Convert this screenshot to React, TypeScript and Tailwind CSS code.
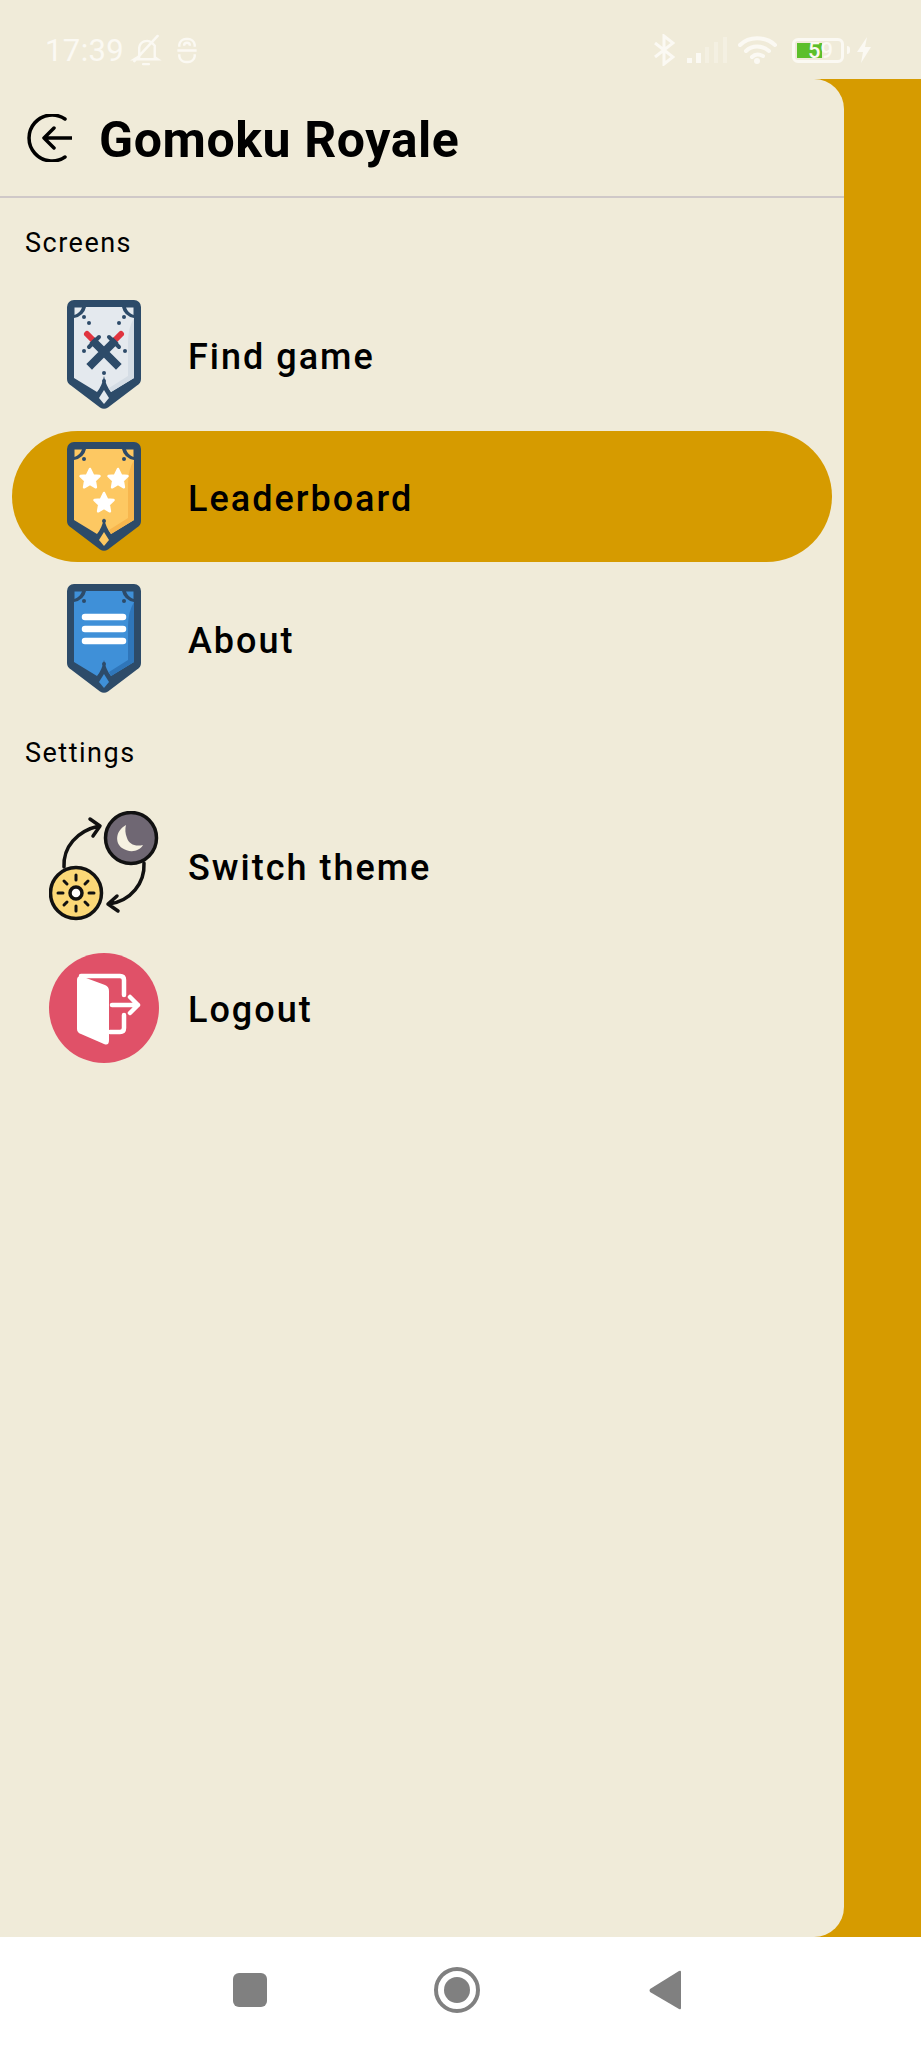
const rows = {
  find: "Find game",
  board: "Leaderboard",
  about: "About",
  theme: "Switch theme",
  logout: "Logout",
};

function Shield({ body, shade, corner, children }: { body: string; shade: string; corner: string; children?: React.ReactNode }) {
  const dark = "#2d4b69";
  return (
    <svg width="74" height="110" viewBox="0 0 74 110">
      <path d="M7 0H67a7 7 0 0 1 7 7V79q0 4-4 6.500L41 107.500q-4 2.500-8 0L4 85.500q-4-2.500-4-6.500V7a7 7 0 0 1 7-7z" fill={dark} />
      <path d="M19 7H55q2 9 12 11V78L44 92q-5-6-7-16q-2 10-7 16L7 78V18q10-2 12-11z" fill={body} />
      <path d="M67 18V78L44 92l-2-4 19-12V42q0-14 6-24z" fill={shade} />
      <path d="M7.500 7.500H15Q13 13 7.500 15zM66.500 7.500H59Q61 13 66.500 15z" fill={corner} />
      <path d="M37 90l5 8-5 6-5-6z" fill={corner} />
      <circle cx="17" cy="17" r="2" fill={dark} />
      <circle cx="57" cy="17" r="2" fill={dark} />
      {children}
    </svg>
  );
}

function FindIcon() {
  const dark = "#2d4b69";
  return (
    <Shield body="#e4e9ee" shade="#d5dde5" corner="#e4e9ee">
      <circle cx="22" cy="23" r="2" fill={dark} />
      <circle cx="52" cy="23" r="2" fill={dark} />
      <circle cx="17" cy="51" r="2" fill={dark} />
      <circle cx="58" cy="51" r="2" fill={dark} />
      <circle cx="37" cy="73" r="2" fill={dark} />
      <circle cx="37" cy="81" r="2" fill={dark} />
      <path d="M47 41l7-7M27 41l-7-7" stroke="#e0343f" strokeWidth="6" strokeLinecap="round" />
      <path d="M46 43L25 64M28 43L49 64" stroke={dark} strokeWidth="8" strokeLinecap="square" />
      <path d="M42 37L52 47M32 37L22 47" stroke={dark} strokeWidth="4" strokeLinecap="round" />
    </Shield>
  );
}

function Star({ x, y }: { x: number; y: number }) {
  return (
    <path
      transform={`translate(${x} ${y})`}
      d="M0-10L3-3.600L9.500-2.900L4.800 1.700L5.900 8.300L0 5L-5.900 8.300L-4.800 1.700L-9.500-2.900L-3-3.600z"
      fill="#ffffff"
      stroke="#ffffff"
      strokeWidth="2.500"
      strokeLinejoin="round"
    />
  );
}

function BoardIcon() {
  return (
    <Shield body="#fdc862" shade="#f7b64e" corner="#fdc862">
      <Star x={23} y={37} />
      <Star x={51} y={37} />
      <Star x={37} y={61} />
      <circle cx="37" cy="79" r="2" fill="#2d4b69" />
    </Shield>
  );
}

function AboutIcon() {
  return (
    <Shield body="#3f90d8" shade="#2f76ba" corner="#3f90d8">
      <path d="M18 33H56M18 45H56M18 57H56" stroke="#ffffff" strokeWidth="6.500" strokeLinecap="round" />
      <circle cx="37" cy="80" r="2" fill="#2d4b69" />
    </Shield>
  );
}

function ThemeIcon() {
  return (
    <svg width="110" height="110" viewBox="0 0 110 110" fill="none">
      <path d="M15 56C14 36 28 20 50 15M41 8l10 7-7 10" stroke="#111" strokeWidth="3.500" strokeLinecap="round" strokeLinejoin="round" />
      <path d="M95 52C96 72 82 90 60 93M68 85l-9 8 10 7" stroke="#111" strokeWidth="3.500" strokeLinecap="round" strokeLinejoin="round" />
      <circle cx="82" cy="27" r="25.500" fill="#6f6773" stroke="#111" strokeWidth="3.500" />
      <path d="M77 14C66 20 66 32 73 37C80 42 90 41 94 34C86 36 80 33 78 27C76 22 76 18 77 14z" fill="#f6f2e2" />
      <circle cx="27" cy="82" r="25.500" fill="#fbd877" stroke="#111" strokeWidth="3.500" />
      <circle cx="27" cy="82" r="6" fill="#ffffff" stroke="#111" strokeWidth="3.500" />
      <path d="M27 64v5M27 95v5M9 82h5M40 82h5M15 70l3 3M36 91l3 3M39 70l-3 3M18 91l-3 3" stroke="#111" strokeWidth="3" strokeLinecap="round" />
    </svg>
  );
}

function LogoutIcon() {
  return (
    <svg width="110" height="110" viewBox="0 0 110 110" fill="none">
      <circle cx="55" cy="55" r="55" fill="#e05168" />
      <path d="M28 27q0-5 5-3.500L56 32q4 1.500 4 6V87q0 6-5 4L32 81q-4-1.500-4-5z" fill="#ffffff" />
      <path d="M32 23H71q4 0 4 4V42M75 62V75q0 4-4 4H61M63 52H89M81 44l8 8-8 8" stroke="#ffffff" strokeWidth="4.500" strokeLinecap="round" strokeLinejoin="round" />
    </svg>
  );
}

function Row({ label, active, children }: { label: string; active?: boolean; children: React.ReactNode }) {
  return (
    <div className={`flex h-[131px] items-center rounded-full pl-[37px] ${active ? "bg-[#d69b00]" : ""}`}>
      <div className="flex w-[110px] justify-center">{children}</div>
      <span className="ml-[29px] pt-[5px] text-[36px] font-medium tracking-[2px] text-black">{label}</span>
    </div>
  );
}

export default function App() {
  return (
    <div className="flex h-[2048px] w-[921px] flex-col overflow-hidden bg-[#f0ebd9] font-['Roboto',sans-serif]">
      {/* status bar */}
      <div className="flex h-[79px] shrink-0 items-center pl-[45px] pr-[50px] pt-[21px] text-[#fbf9f3]">
        <span className="text-[31px] leading-none tracking-[0.4px]">17:39</span>
        <svg className="ml-[6px]" width="32" height="33" viewBox="0 0 32 34" fill="none" stroke="currentColor" strokeWidth="2.500" strokeLinecap="round">
          <path d="M9 24V14a8 8 0 0 1 13-5l3 3v12l3 2H4l5-3M28 2L4 28M13 31h6" />
        </svg>
        <svg className="ml-[14px]" width="22" height="27" viewBox="0 0 22 28" fill="none" stroke="currentColor" strokeWidth="2.500">
          <path d="M3 10V8a7 7 0 0 1 7-6h2a7 7 0 0 1 7 6v2M1 14h20M3 18v2a7 7 0 0 0 7 6h2a7 7 0 0 0 7-6v-2M8 9a3 3 0 0 1 6 0" />
        </svg>
        <div className="ml-auto flex items-center">
          <svg width="22" height="32" viewBox="0 0 22 32" fill="none" stroke="currentColor" strokeWidth="3">
            <path d="M2 9l18 14-9 7V2l9 7L2 23" />
          </svg>
          <svg className="ml-[12px]" width="40" height="28" viewBox="0 0 40 28" fill="currentColor">
            <rect x="0" y="22" width="5" height="5" />
            <rect x="9" y="17" width="5" height="10" />
            <rect x="18" y="11" width="4" height="16" opacity="0.35" />
            <rect x="27" y="6" width="4" height="21" opacity="0.35" />
            <rect x="36" y="1" width="4" height="26" opacity="0.35" />
          </svg>
          <svg className="ml-[11px]" width="40" height="30" viewBox="0 0 40 30" fill="none" stroke="currentColor" strokeWidth="4" strokeLinecap="round">
            <path d="M2 10C11 1 27 1 37 10M8 16C14 10 24 10 31 16M14 22C17 19 21 19 25 21" />
            <circle cx="19" cy="26" r="3" fill="currentColor" stroke="none" />
          </svg>
          <div className="relative ml-[14px] h-[25px] w-[52px] rounded-[6px] border-[3px] border-[#fbf9f3] p-[2px]">
            <div className="h-full w-[25px] bg-[#5cbf2a]" />
            <span className="absolute left-[13px] top-[-3px] text-[22px] font-medium leading-[25px]">59</span>
          </div>
          <div className="ml-[3px] h-[8px] w-[3px] rounded-r-sm bg-[#fbf9f3]" />
          <svg className="ml-[7px]" width="14" height="26" viewBox="0 0 14 26" fill="currentColor">
            <path d="M10 0L0 15h6l-2 11L14 10H8z" />
          </svg>
        </div>
      </div>

      {/* drawer over the gold screen */}
      <div className="flex-1 bg-[#d69b00]">
        <div className="flex h-full w-[844px] flex-col rounded-r-[30px] bg-[#f0ebd9]">
          <div className="flex h-[119px] shrink-0 items-center border-b-2 border-[#cfc8c8] pl-[26px]">
            <svg width="46" height="48" viewBox="0 0 46 48" fill="none" stroke="#000" strokeWidth="3.500" strokeLinecap="round" strokeLinejoin="round">
              <path d="M39 5A23 23 0 1 0 39 43M18 24H46M28 14L18 24L28 34" />
            </svg>
            <h1 className="ml-[27px] pt-[5px] text-[50px] font-bold leading-none tracking-[0.6px] text-black">Gomoku Royale</h1>
          </div>
          <div className="flex flex-col px-[12px]">
            <p className="flex h-[91px] items-center pl-[13px] text-[27px] tracking-[1.5px] text-black">Screens</p>
            <div className="flex flex-col gap-[11px]">
              <Row label={rows.find}><FindIcon /></Row>
              <Row label={rows.board} active><BoardIcon /></Row>
              <Row label={rows.about}><AboutIcon /></Row>
            </div>
            <p className="flex h-[96px] items-center pl-[13px] pt-[2px] text-[27px] tracking-[1.5px] text-black">Settings</p>
            <div className="flex flex-col gap-[11px]">
              <Row label={rows.theme}><ThemeIcon /></Row>
              <Row label={rows.logout}><LogoutIcon /></Row>
            </div>
          </div>
        </div>
      </div>

      {/* system nav */}
      <div className="flex h-[111px] shrink-0 items-center bg-white pb-[5px] pl-[233px]">
        <div className="h-[34px] w-[34px] rounded-[6px] bg-[#808080]" />
        <div className="ml-[167px] flex h-[46px] w-[46px] items-center justify-center rounded-full border-4 border-[#808080]">
          <div className="h-[26px] w-[26px] rounded-full bg-[#808080]" />
        </div>
        <svg className="ml-[169px]" width="32" height="40" viewBox="0 0 32 40" fill="#808080">
          <path d="M32 2V38q0 2-2 1L1 22q-1-2 0-3L30 1q2-1 2 1z" />
        </svg>
      </div>
    </div>
  );
}
